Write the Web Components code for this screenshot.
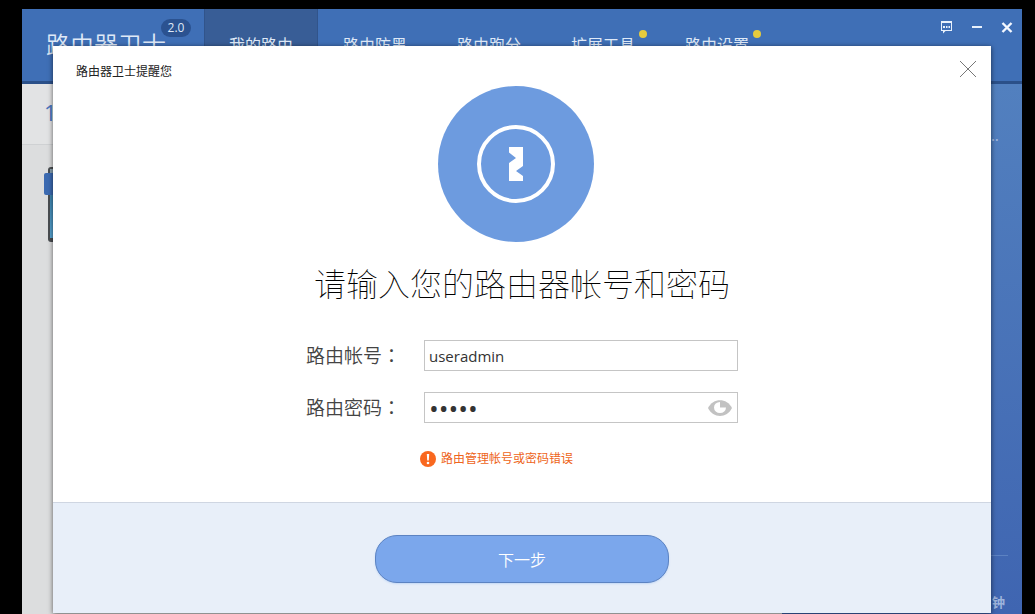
<!DOCTYPE html>
<html lang="zh-CN">
<head>
<meta charset="UTF-8">
<meta name="viewport" content="width=device-width, initial-scale=1.0">
<title>路由器卫士</title>
<style>
    body {
        margin: 0;
        background: #000;
        font-family: "Open Sans", "Noto Sans CJK SC", sans-serif;
        font-size: 16px;
    }
</style>
</head>
<body>
<router-window>
    <router-header slot="header" version="2.0">
        路由器卫士
        <nav-tab slot="nav" active>我的路由</nav-tab>
        <nav-tab slot="nav">路由防黑</nav-tab>
        <nav-tab slot="nav">路由跑分</nav-tab>
        <nav-tab slot="nav" notice>扩展工具</nav-tab>
        <nav-tab slot="nav" notice>路由设置</nav-tab>
    </router-header>
    <device-panel slot="main">1</device-panel>
    <status-sidebar slot="side">
        <span slot="top">…</span>
        <span slot="bottom">钟</span>
    </status-sidebar>
    <router-dialog slot="dialog">
        <span slot="title">路由器卫士提醒您</span>
        <login-form></login-form>
        <next-button slot="footer">下一步</next-button>
    </router-dialog>
</router-window>

<script>
class RouterWindow extends HTMLElement {
    connectedCallback() {
        this.attachShadow({ mode: 'open' });
        this.shadowRoot.innerHTML = `
            <style>
                :host {
                    display: flex;
                    box-sizing: border-box;
                    min-height: 100vh;
                    padding: 9px 13px 0 22px;
                }
                .window {
                    position: relative;
                    flex: 1;
                    display: flex;
                    flex-direction: column;
                }
                .content {
                    flex: 1;
                    display: grid;
                    grid-template-columns: 1fr 240px;
                }
                .dialog {
                    position: absolute;
                    inset: 37px 31px 1px;
                    display: flex;
                }
            </style>
            <div class="window">
                <slot name="header"></slot>
                <div class="content">
                    <slot name="main"></slot>
                    <slot name="side"></slot>
                </div>
                <div class="dialog"><slot name="dialog"></slot></div>
            </div>
        `;
    }
}

class RouterHeader extends HTMLElement {
    connectedCallback() {
        this.attachShadow({ mode: 'open' });
        this.shadowRoot.innerHTML = `
            <style>
                :host {
                    display: flex;
                    height: 72px;
                    background: #3f6fb6;
                    border-bottom: 3px solid #2b5089;
                    color: #dfe9f7;
                }
                .brand {
                    position: relative;
                    box-sizing: border-box;
                    width: 182px;
                    padding-left: 24px;
                    font-size: 24px;
                    font-weight: 350;
                    line-height: 72px;
                    white-space: nowrap;
                }
                .version {
                    position: absolute;
                    top: 10px;
                    right: 13px;
                    width: 30px;
                    border-radius: 9px;
                    background: #2b5290;
                    font-size: 12px;
                    font-weight: 400;
                    line-height: 18px;
                    text-align: center;
                }
                nav {
                    display: flex;
                    flex: 1;
                }
                .controls {
                    display: flex;
                    align-items: flex-start;
                    gap: 14px;
                    padding: 10px 7px 0 0;
                }
                button {
                    display: flex;
                    padding: 0;
                    border: 0;
                    background: none;
                    cursor: pointer;
                }
            </style>
            <div class="brand"><slot></slot><span class="version">${this.getAttribute('version')}</span></div>
            <nav><slot name="nav"></slot></nav>
            <div class="controls">
                <button aria-label="反馈">
                    <svg width="16" height="16" viewBox="0 0 16 16" fill="#e8f1fc">
                        <path d="M2 2H13V12H6.500L4 14.500V12H2ZM3 4V11H12V4Z" fill-rule="evenodd"/>
                        <path d="M4 7H6V9H4ZM7 7H8.500V9H7ZM9.500 7H11V9H9.500Z"/>
                    </svg>
                </button>
                <button aria-label="最小化">
                    <svg width="16" height="16" viewBox="0 0 16 16"><path d="M3 7H13V9H3Z" fill="#e8f1fc"/></svg>
                </button>
                <button aria-label="关闭">
                    <svg width="16" height="16" viewBox="0 0 16 16" fill="none" stroke="#f4f8ff" stroke-width="2.400">
                        <path d="M3.500 4L12.500 13M12.500 4L3.500 13"/>
                    </svg>
                </button>
            </div>
        `;
    }
}

class NavTab extends HTMLElement {
    connectedCallback() {
        this.attachShadow({ mode: 'open' });
        this.shadowRoot.innerHTML = `
            <style>
                :host {
                    display: block;
                    width: 114px;
                }
                a {
                    position: relative;
                    display: block;
                    box-sizing: border-box;
                    color: inherit;
                    line-height: 72px;
                    text-align: center;
                    text-decoration: none;
                }
                :host([active]) a {
                    background: #385d96;
                    box-shadow: inset 1px 0 #31548b, inset -1px 0 #31548b;
                }
                .dot {
                    display: none;
                    position: absolute;
                    top: 21px;
                    right: 13px;
                    width: 8px;
                    height: 8px;
                    border-radius: 50%;
                    background: #e6cb3d;
                }
                :host([notice]) .dot {
                    display: block;
                }
            </style>
            <a href="#"><slot></slot><span class="dot"></span></a>
        `;
    }
}

class DevicePanel extends HTMLElement {
    connectedCallback() {
        this.attachShadow({ mode: 'open' });
        this.shadowRoot.innerHTML = `
            <style>
                :host {
                    display: block;
                    background: #dcddde;
                }
                .count {
                    padding: 0 0 4px 22px;
                    background: #e2e3e4;
                    border-bottom: 1px solid #cfd1d3;
                    color: #4a73bd;
                    font-size: 22px;
                    line-height: 56px;
                }
                svg {
                    display: block;
                    margin: 22px 0 0 22px;
                }
            </style>
            <div class="count"><slot></slot></div>
            <svg width="60" height="76" viewBox="0 0 60 76">
                <defs>
                    <linearGradient id="screen" x1="0" y1="0" x2="0" y2="1">
                        <stop offset="0" stop-color="#8fa3b0"/>
                        <stop offset="0.4" stop-color="#3f87b3"/>
                        <stop offset="1" stop-color="#58a5d3"/>
                    </linearGradient>
                </defs>
                <rect x="4" y="0" width="50" height="75" rx="3" fill="#4a4e52"/>
                <rect x="6" y="2" width="46" height="69" fill="url(#screen)"/>
                <rect x="0" y="6" width="30" height="22" rx="2" fill="#3c6ab1"/>
            </svg>
        `;
    }
}

class StatusSidebar extends HTMLElement {
    connectedCallback() {
        this.attachShadow({ mode: 'open' });
        this.shadowRoot.innerHTML = `
            <style>
                :host {
                    display: flex;
                    flex-direction: column;
                    justify-content: space-between;
                    padding: 44px 14px 2px;
                    background: linear-gradient(#5280bf, #3f65b1);
                    color: #9db4dc;
                    text-align: right;
                }
                .top {
                    padding-right: 9px;
                    font-family: "Liberation Sans", sans-serif;
                    font-size: 12px;
                    font-weight: 700;
                    line-height: 18px;
                }
                .bottom {
                    padding: 36px 3px 0 0;
                    border-top: 1px solid #5c82c2;
                    font-size: 13px;
                    font-weight: 700;
                    line-height: 20px;
                }
            </style>
            <div class="top"><slot name="top"></slot></div>
            <div class="bottom"><slot name="bottom"></slot></div>
        `;
    }
}

class RouterDialog extends HTMLElement {
    connectedCallback() {
        this.attachShadow({ mode: 'open' });
        this.shadowRoot.innerHTML = `
            <style>
                :host {
                    flex: 1;
                    display: flex;
                    flex-direction: column;
                    background: #fff;
                    box-shadow: 0 1px 5px rgba(0, 0, 0, 0.6);
                }
                header {
                    display: flex;
                    justify-content: space-between;
                    align-items: flex-start;
                    padding: 14px 14px 2px 23px;
                    color: #222;
                    font-size: 12px;
                    line-height: 24px;
                }
                .close {
                    display: flex;
                    padding: 0;
                    border: 0;
                    background: none;
                    cursor: pointer;
                }
                main {
                    flex: 1;
                }
                footer {
                    display: flex;
                    justify-content: center;
                    padding: 32px 0 30px;
                    background: #e8eff9;
                    border-top: 1px solid #cfd6e2;
                }
            </style>
            <header>
                <slot name="title"></slot>
                <button class="close" aria-label="关闭">
                    <svg width="18" height="18" viewBox="0 0 18 18" stroke="#777"><path d="M1 1L17 17M17 1L1 17"/></svg>
                </button>
            </header>
            <main><slot></slot></main>
            <footer><slot name="footer"></slot></footer>
        `;
    }
}

class LoginForm extends HTMLElement {
    connectedCallback() {
        this.attachShadow({ mode: 'open' });
        this.shadowRoot.innerHTML = `
            <style>
                :host {
                    display: flex;
                    flex-direction: column;
                    align-items: center;
                }
                .emblem {
                    margin-right: 12px;
                }
                h1 {
                    margin: 20px 0 34px;
                    color: #000;
                    font-size: 32px;
                    font-weight: 100;
                    line-height: 44px;
                }
                form {
                    display: grid;
                    grid-template-columns: 118px 314px;
                    row-gap: 21px;
                    align-items: center;
                }
                label {
                    color: #444;
                    font-size: 19px;
                    font-weight: 350;
                    line-height: 24px;
                }
                .colon {
                    font-family: "Noto Sans CJK TC", sans-serif;
                }
                .field {
                    display: flex;
                    align-items: center;
                    box-sizing: border-box;
                    height: 31px;
                    padding: 0 5px 0 4px;
                    border: 1px solid #c5c5c5;
                }
                input {
                    flex: 1;
                    min-width: 0;
                    padding: 0;
                    border: 0;
                    outline: 0;
                    background: none;
                    color: #333;
                    font: 15px/20px "Open Sans", sans-serif;
                }
                input[type="password"] {
                    font-size: 26px;
                }
                .eye {
                    display: flex;
                    padding: 0;
                    border: 0;
                    background: none;
                    cursor: pointer;
                }
                .error {
                    grid-column: 2;
                    display: flex;
                    align-items: center;
                    gap: 5px;
                    margin: 7px 0 0 -4px;
                    color: #ee6420;
                    font-size: 12px;
                    line-height: 16px;
                }
            </style>
            <svg class="emblem" width="156" height="156" viewBox="0 0 156 156">
                <circle cx="78" cy="78" r="78" fill="#6d9bdf"/>
                <circle cx="78" cy="78" r="37" fill="none" stroke="#fff" stroke-width="4"/>
                <path d="M71 61H85V80L78 85L85 90V95H71V77L78 72L71 66.500Z" fill="#fff"/>
            </svg>
            <h1>请输入您的路由器帐号和密码</h1>
            <form>
                <label for="account">路由帐号<span class="colon" lang="zh-TW">：</span></label>
                <div class="field"><input id="account" type="text" value="useradmin"></div>
                <label for="password">路由密码<span class="colon" lang="zh-TW">：</span></label>
                <div class="field">
                    <input id="password" type="password" value="admin">
                    <button class="eye" type="button" aria-label="显示密码">
                        <svg width="24" height="18" viewBox="0 0 24 18">
                            <path d="M0 9C5 -1.500 19 -1.500 24 9C19 19.500 5 19.500 0 9Z" fill="#c2c2c2"/>
                            <path d="M12 3V8.500H18A6 5.500 0 1 1 12 3Z" fill="#fff"/>
                        </svg>
                    </button>
                </div>
                <div class="error" role="alert">
                    <svg width="16" height="16" viewBox="0 0 16 16">
                        <circle cx="8" cy="8" r="8" fill="#f9681f"/>
                        <path d="M6.800 3H9.200L8.800 9.500H7.200Z" fill="#fff"/>
                        <circle cx="8" cy="12" r="1.300" fill="#fff"/>
                    </svg>
                    <span>路由管理帐号或密码错误</span>
                </div>
            </form>
        `;
    }
}

class NextButton extends HTMLElement {
    connectedCallback() {
        this.attachShadow({ mode: 'open' });
        this.shadowRoot.innerHTML = `
            <style>
                :host {
                    display: block;
                }
                button {
                    width: 294px;
                    height: 48px;
                    border: 1px solid #5c83c2;
                    border-radius: 22px;
                    background: #7ba7ec;
                    box-shadow: 0 1px 2px #c3d8f6;
                    color: #fff;
                    font-family: inherit;
                    font-size: 16px;
                    font-weight: 350;
                    cursor: pointer;
                }
            </style>
            <button type="button"><slot></slot></button>
        `;
    }
}

customElements.define('router-window', RouterWindow);
customElements.define('router-header', RouterHeader);
customElements.define('nav-tab', NavTab);
customElements.define('device-panel', DevicePanel);
customElements.define('status-sidebar', StatusSidebar);
customElements.define('router-dialog', RouterDialog);
customElements.define('login-form', LoginForm);
customElements.define('next-button', NextButton);
</script>
</body>
</html>
